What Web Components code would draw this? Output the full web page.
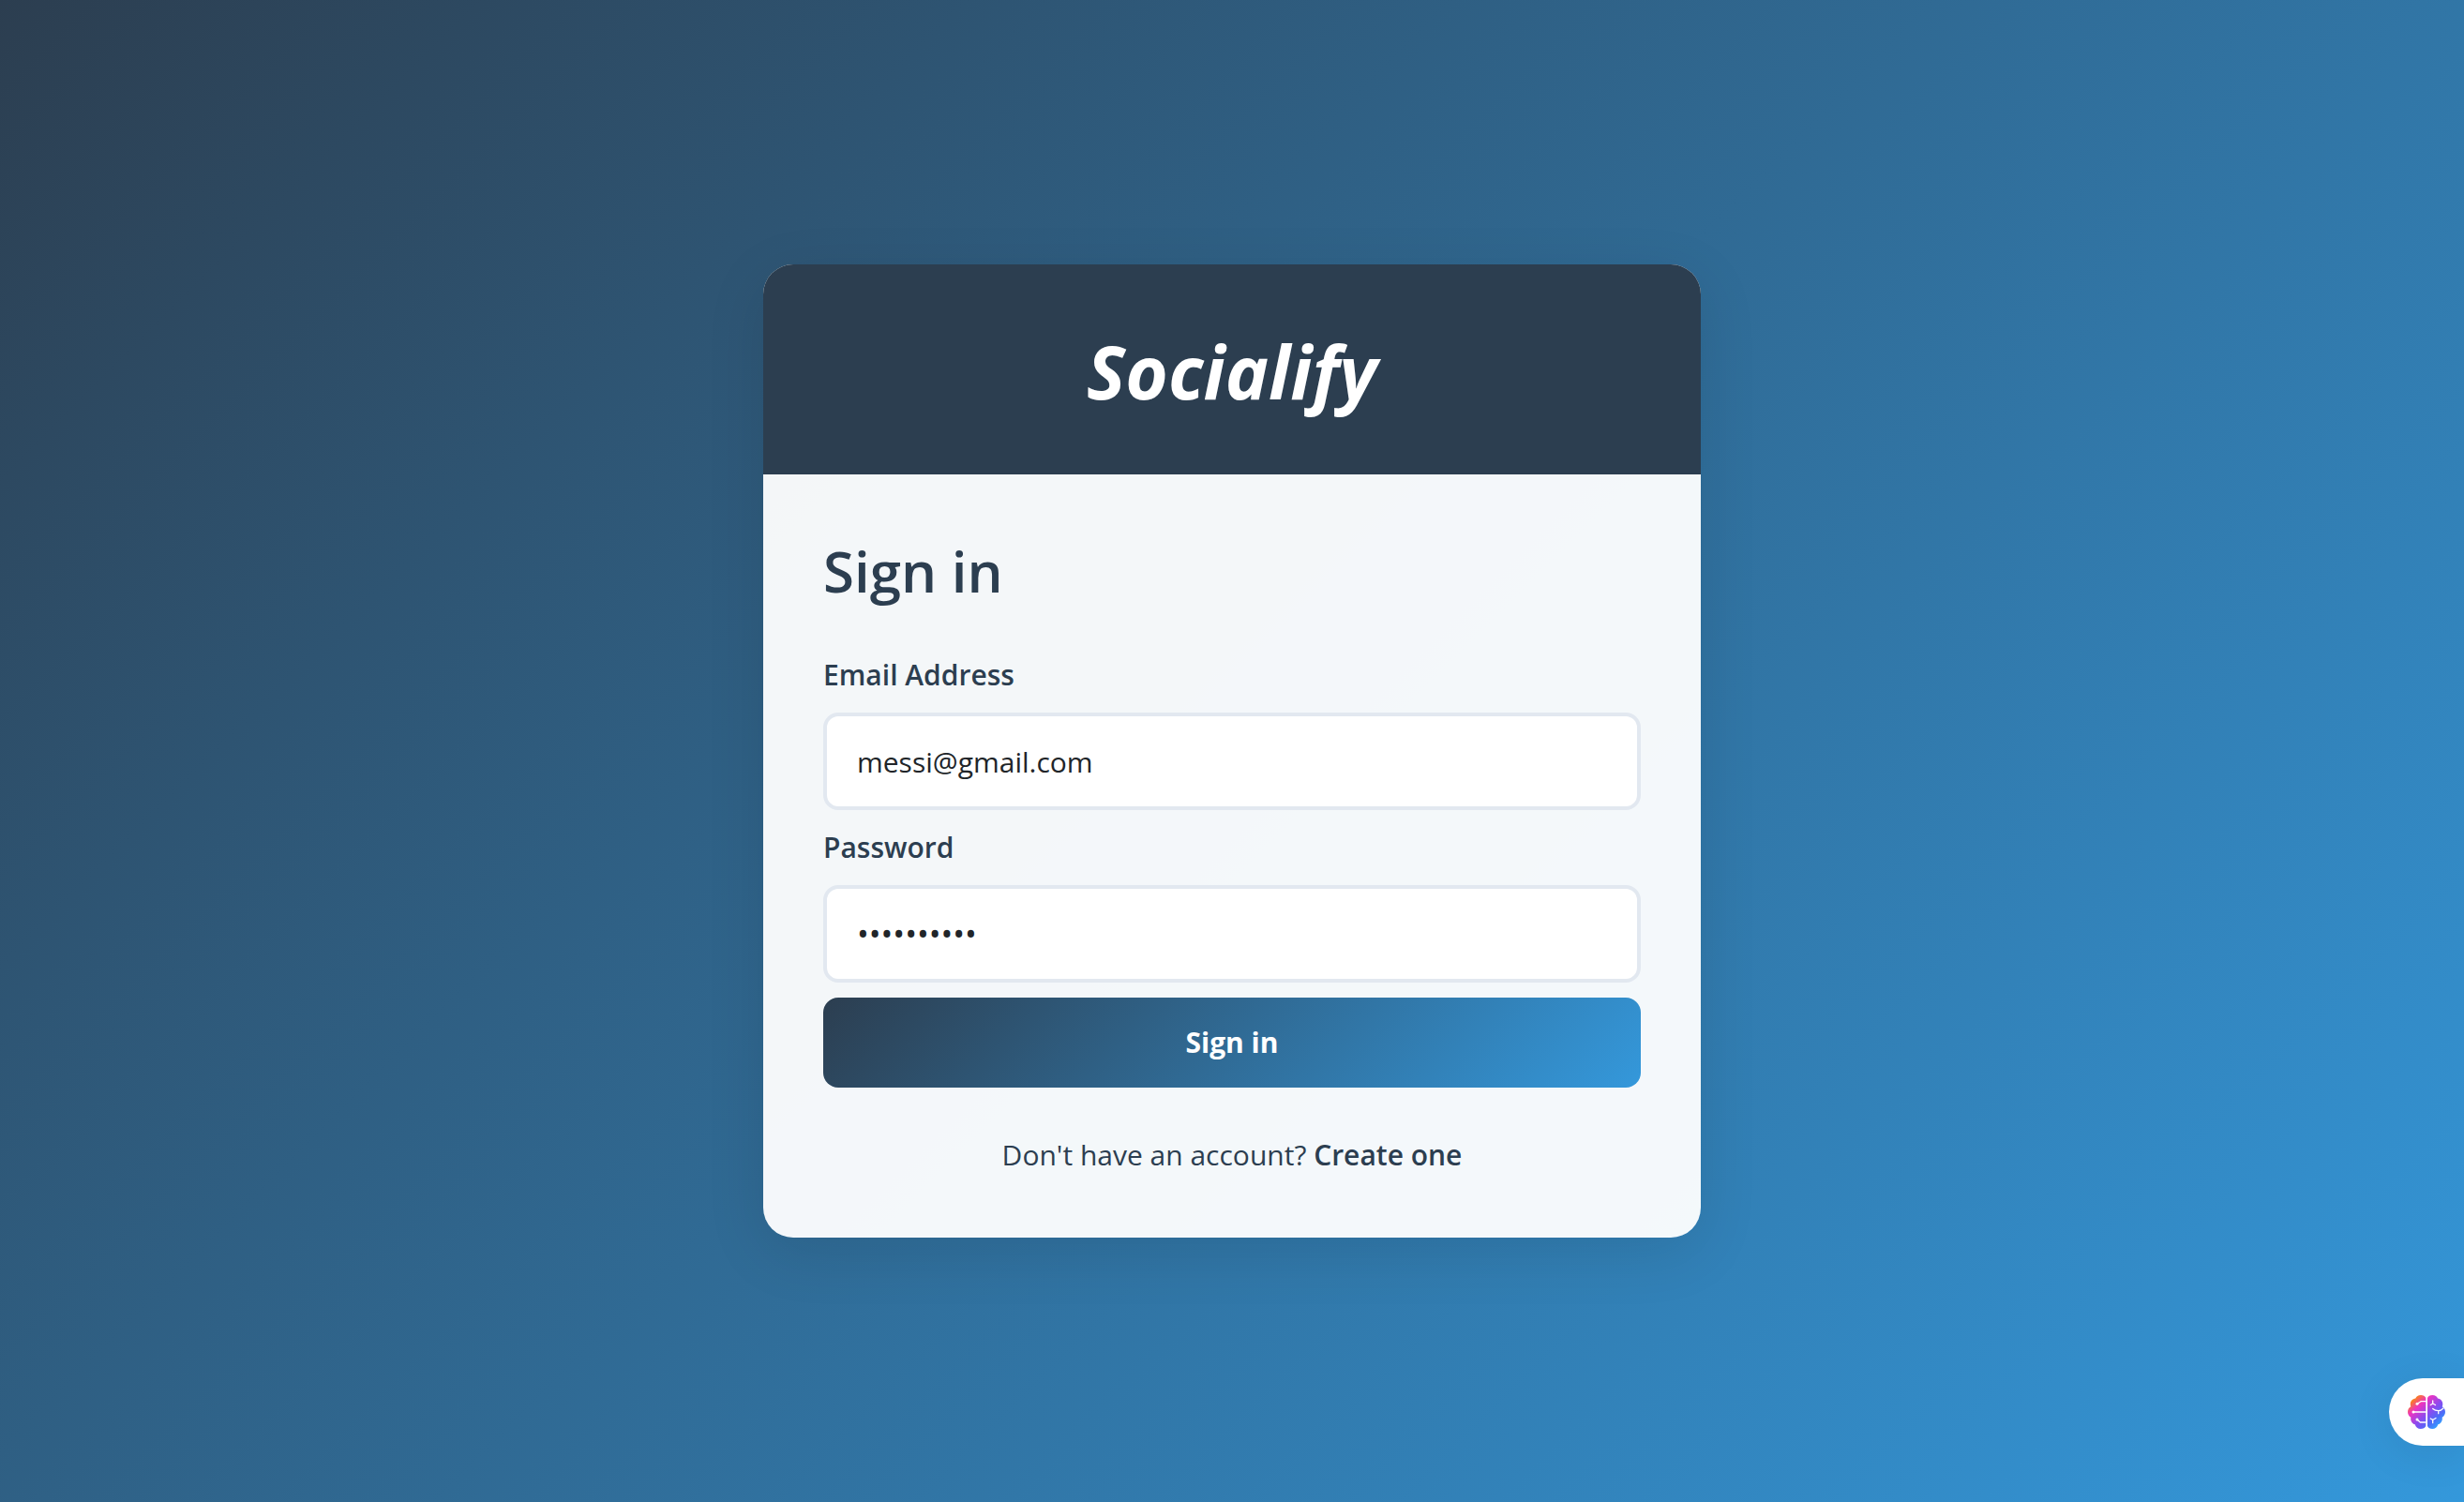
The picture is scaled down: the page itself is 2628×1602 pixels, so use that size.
<!DOCTYPE html>
<html lang="en">
<head>
<meta charset="utf-8">
<meta name="viewport" content="width=device-width, initial-scale=1">
<title>Socialify</title>
<style>
  body {
    margin: 0;
    min-height: 100vh;
    display: flex;
    font-family: "Open Sans", "Noto Sans", sans-serif;
    font-size: 30px;
    line-height: 48px;
    color: #2c3e50;
    background: linear-gradient(135deg, #2c3e50, #3498db);
  }
</style>
</head>
<body>
<login-page></login-page>
<script>
const define = (name, html, setup) => {
  const template = document.createElement("template");
  template.innerHTML = html;
  customElements.define(name, class extends HTMLElement {
    constructor() {
      super();
      this.attachShadow({ mode: "open" }).append(template.content.cloneNode(true));
    }
    connectedCallback() {
      if (setup) setup(this, this.shadowRoot);
    }
  });
};

define("brand-card", `
  <style>
    :host {
      display: block;
      width: 100%;
      max-width: 1000px;
      border-radius: 32px;
      overflow: hidden;
      background: rgba(255, 255, 255, 0.95);
      box-shadow: 0 16px 64px rgba(0, 0, 0, 0.1);
    }
    header { padding: 64px 64px 60px; background: #2c3e50; text-align: center; }
    h1 {
      margin: 0;
      color: #fff;
      font-size: 78px;
      line-height: 100px;
      font-weight: 700;
      font-style: italic;
    }
    main { padding: 64px; }
  </style>
  <header><h1><slot name="brand"></slot></h1></header>
  <main><slot></slot></main>
`);

define("text-field", `
  <style>
    :host { display: block; margin-bottom: 16px; }
    label { display: block; margin-bottom: 16px; font-weight: 600; }
    input {
      display: block;
      box-sizing: border-box;
      width: 100%;
      height: 104px;
      padding: 0 32px;
      border: 4px solid #e2e8f0;
      border-radius: 16px;
      background: #fff;
      color: #212529;
      font: inherit;
      font-weight: 400;
      outline: none;
    }
    input[type="password"] { font-size: 34px; }
    input:focus { border-color: #3498db; }
  </style>
  <label for="control"></label>
  <input id="control">
`, (host, root) => {
  root.querySelector("label").textContent = host.getAttribute("label");
  const input = root.querySelector("input");
  input.type = host.getAttribute("type");
  input.value = host.getAttribute("value");
});

define("primary-button", `
  <style>
    :host { display: block; }
    button {
      display: block;
      width: 100%;
      padding: 24px;
      border: 0;
      border-radius: 16px;
      background: linear-gradient(135deg, #2c3e50, #3498db);
      color: #fff;
      font: inherit;
      font-weight: 700;
      cursor: pointer;
    }
  </style>
  <button type="button"><slot></slot></button>
`);

define("brain-tab", `
  <style>
    :host { position: fixed; right: 0; bottom: 60px; }
    button {
      display: flex;
      align-items: center;
      width: 80px;
      height: 72px;
      padding: 0 0 0 20px;
      border: 0;
      border-radius: 36px 0 0 36px;
      background: #fff;
      cursor: pointer;
      box-shadow: 0 8px 48px rgba(0, 0, 0, 0.08);
    }
    svg { display: block; width: 40px; height: 40px; }
  </style>
  <button type="button" aria-label="Open assistant">
    <svg viewBox="0 0 40 40" aria-hidden="true">
      <defs>
        <linearGradient id="g" x1="5" y1="3" x2="35" y2="36" gradientUnits="userSpaceOnUse">
          <stop offset="0" stop-color="#ff9d0a"/>
          <stop offset="0.1" stop-color="#f9772f"/>
          <stop offset="0.28" stop-color="#ee33c0"/>
          <stop offset="0.56" stop-color="#8a4bf0"/>
          <stop offset="0.78" stop-color="#4d6cf8"/>
          <stop offset="1" stop-color="#2cb0ff"/>
        </linearGradient>
      </defs>
      <g fill="url(#g)">
        <path d="M19.3 5C18.5 3 16.500 2 14 2C11 2 9.200 3.500 8.300 5.500C5 6 2.800 8.500 2.800 11.500C2.800 12.800 3 13.500 3.300 14.300C1.200 15.500 0 17.500 0 20C0 22.500 1.200 24.600 3.300 25.700C2.700 29.500 4.500 32.300 7.700 33.300C8.500 36.200 10.800 38 13.700 38C16.400 38 18.500 37 19.300 35Z"/>
        <path d="M21 5C21.800 3 23.700 2 26.300 2C29.200 2 31.100 3.500 32 5.500C35.200 6 37.300 8.500 37.300 11.500C37.300 12.800 37.100 13.500 36.700 14.300C38.800 15.500 40 17.500 40 20C40 22.500 38.800 24.600 36.700 25.700C37.300 29.500 35.500 32.300 32.300 33.300C31.500 36.200 29.200 38 26.300 38C23.700 38 21.800 37 21 35Z"/>
      </g>
      <g fill="none" stroke="#fff" stroke-width="1.300" stroke-linecap="round" stroke-linejoin="round">
        <path d="M19.300 8.700H14L10 11.300M19.300 20H6M19.300 31H13.300L10 28"/>
        <path d="M26.700 8V11L24.300 12.500M26.700 11L29.500 12.500M26.700 16.500C28.500 18.200 30.300 18.700 32.700 18.700C35 18.700 36.500 17.500 38 16M32.700 18.700V21.700M24.300 27L26.700 28.500L30 26.500M26.700 28.500V31.700"/>
      </g>
      <g fill="#fff"><circle cx="10" cy="11.300" r="1.500"/><circle cx="6" cy="20" r="1.500"/><circle cx="10" cy="28" r="1.500"/></g>
    </svg>
  </button>
`);

define("login-page", `
  <style>
    :host {
      flex: 1;
      display: flex;
      align-items: center;
      justify-content: center;
      padding: 32px;
    }
    h2 { margin: 0 0 48px; font-size: 60px; line-height: 78px; font-weight: 600; }
    p { margin: 48px 0 0; text-align: center; }
    a { color: inherit; font-weight: 600; text-decoration: none; }
  </style>
  <brand-card>
    <span slot="brand">Socialify</span>
    <h2>Sign in</h2>
    <text-field label="Email Address" type="email" value="messi@gmail.com"></text-field>
    <text-field label="Password" type="password" value="barcelona1"></text-field>
    <primary-button>Sign in</primary-button>
    <p>Don't have an account? <a href="#register">Create one</a></p>
  </brand-card>
  <brain-tab></brain-tab>
`);
</script>
</body>
</html>
